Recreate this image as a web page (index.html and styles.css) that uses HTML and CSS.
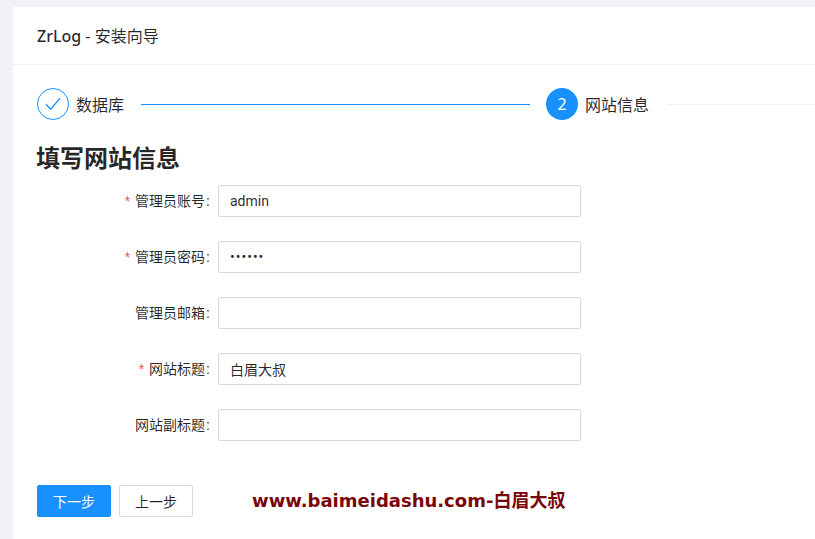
FILE: index.html
```html
<!DOCTYPE html>
<html lang="zh">
<head>
<meta charset="utf-8">
<title>ZrLog - 安装向导</title>
<link rel="stylesheet" href="styles.css">
</head>
<body>
<main class="card">
  <header class="card-head"><span class="brand">ZrLog</span> - 安装向导</header>
  <div class="card-body">
    <div class="steps">
      <div class="step">
        <span class="dot dot-done">
          <svg width="16" height="14" viewBox="0 0 16 14" fill="none" stroke="#1890ff" stroke-width="1.3"><path d="M1 7.2 L5.8 12.2 L15 1.2"/></svg>
        </span>
        <span class="step-name">数据库</span>
      </div>
      <span class="rail rail-done"></span>
      <div class="step">
        <span class="dot dot-now">2</span>
        <span class="step-name">网站信息</span>
      </div>
      <span class="rail"></span>
    </div>
    <h1 class="title">填写网站信息</h1>
    <form class="form">
      <div class="row"><label class="label"><i class="req">*</i>管理员账号<span class="colon">:</span></label><input class="input" value="admin"></div>
      <div class="row"><label class="label"><i class="req">*</i>管理员密码<span class="colon">:</span></label><input class="input input-secret" type="password" value="123456"></div>
      <div class="row"><label class="label">管理员邮箱<span class="colon">:</span></label><input class="input"></div>
      <div class="row"><label class="label"><i class="req">*</i>网站标题<span class="colon">:</span></label><input class="input" value="白眉大叔"></div>
      <div class="row"><label class="label">网站副标题<span class="colon">:</span></label><input class="input"></div>
    </form>
    <div class="actions">
      <button class="btn btn-primary" type="button">下一步</button>
      <button class="btn" type="button">上一步</button>
      <span class="mark">www.baimeidashu.com-白眉大叔</span>
    </div>
  </div>
</main>
</body>
</html>
```
FILE: styles.css
```css
* { box-sizing: border-box; }
html, body { height: 100%; }
body {
  margin: 0;
  padding: 7px 0 0 13px;
  background: #f0f2f5;
  overflow: hidden;
  color: rgba(0,0,0,.85);
  font: 14px/22px "Noto Sans CJK SC", "Noto Sans", sans-serif;
}
.card { background: #fff; height: 100%; }
.card-head {
  height: 58px;
  padding-left: 24px;
  border-bottom: 1px solid #f0f0f0;
  font: 400 16px/58px "Noto Sans", "Noto Sans CJK SC", sans-serif;
}
.brand { font-weight: 500; }
.card-body { padding: 23px 0 0 24px; }
.steps { display: flex; align-items: center; height: 32px; }
.step { display: flex; align-items: center; flex: none; }
.dot {
  width: 32px; height: 32px; border-radius: 50%;
  display: flex; align-items: center; justify-content: center;
  font: 16px/32px "Noto Sans", sans-serif;
}
.dot-done { border: 1px solid #1890ff; }
.dot-now { background: #1890ff; color: #fff; }
.step-name { margin-left: 7px; font-size: 16px; line-height: 32px; }
.rail { height: 1px; background: #f0f0f0; flex: 1; margin-left: 17px; }
.rail-done { background: #1890ff; flex: 0 0 389px; margin-right: 16px; }
.title { margin: 20px 0 0 -1px; font-size: 24px; line-height: 34px; font-weight: 700; }
.form { margin-top: 11px; }
.row { display: flex; align-items: center; margin-bottom: 24px; }
.label { width: 181px; padding-bottom: 2px; text-align: right; font-size: 14px; white-space: nowrap; }
.colon { margin: 0 8px 0 1px; font-family: "Liberation Sans", sans-serif; }
.req { color: #ff4d4f; font-style: normal; font-family: "Liberation Sans", sans-serif; margin-right: 5px; }
.input {
  width: 363px; height: 32px;
  padding: 0 11px;
  border: 1px solid #d9d9d9;
  border-radius: 2px;
  outline: 0;
  color: rgba(0,0,0,.85);
  font: 14px Roboto, "Noto Sans CJK SC", sans-serif;
}
.input-secret { letter-spacing: 1px; }
.actions { display: flex; align-items: center; margin-top: 44px; }
.btn {
  width: 74px; height: 32px; padding: 0;
  margin-right: 8px;
  border: 1px solid #d9d9d9;
  border-radius: 2px;
  background: #fff;
  color: rgba(0,0,0,.85);
  font: 14px "Noto Sans CJK SC", sans-serif;
}
.btn-primary { background: #1890ff; border-color: #1890ff; color: #fff; }
.mark {
  margin-left: 51px;
  color: #7a0508;
  font: 700 18px/32px "DejaVu Sans", "Noto Sans CJK SC", sans-serif;
  white-space: nowrap;
}
```
